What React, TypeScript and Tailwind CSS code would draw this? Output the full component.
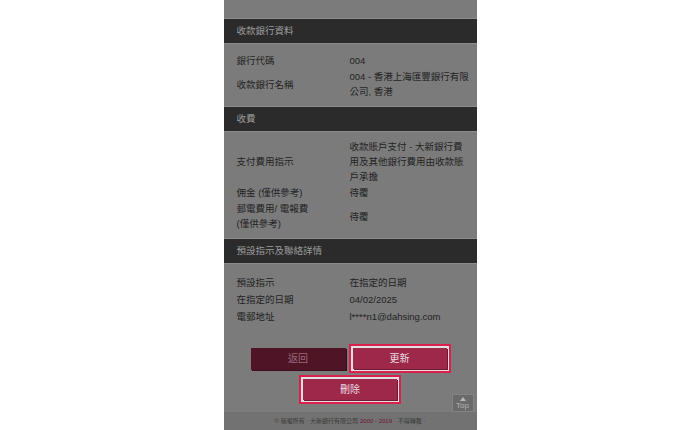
import type { ReactNode } from "react"

const FONT = "font-['Liberation_Sans','Noto_Sans_CJK_TC',sans-serif]"

function SectionHeader({ children }: { children: ReactNode }) {
  return (
    <div className="h-[26px] flex items-center px-[13px] bg-[#2b2b2b] border-y border-[#8c8c8c] text-[9.5px] text-[#9c9c9c]">
      {children}
    </div>
  )
}

function Row({ label, value }: { label: ReactNode; value: ReactNode }) {
  return (
    <div className="min-h-[17px] flex items-center text-[9.5px] leading-[15px] text-[#232323]">
      <div className="w-[126px] pl-[13px] pr-2 shrink-0">{label}</div>
      <div className="flex-1 pr-[10px]">{value}</div>
    </div>
  )
}

export default function App() {
  return (
    <div className={`h-[430px] w-full bg-white flex justify-center ${FONT}`}>
      <div className="relative w-[253px] h-full bg-[#7b7b7b] flex flex-col overflow-hidden">
        <div className="h-[18px] shrink-0" />

        {/* 收款銀行資料 */}
        <SectionHeader>收款銀行資料</SectionHeader>
        <div className="pt-[8px] pb-[7px]">
          <Row label="銀行代碼" value="004" />
          <Row
            label="收款銀行名稱"
            value={
              <>
                <span className="whitespace-nowrap">004 - 香港上海匯豐銀行有限</span>
                <br />
                公司, 香港
              </>
            }
          />
        </div>

        {/* 收費 */}
        <SectionHeader>收費</SectionHeader>
        <div className="pt-[7px] pb-[7px]">
          <Row label="支付費用指示" value="收款賬戶支付 - 大新銀行費用及其他銀行費用由收款賬戶承擔" />
          <Row label="佣金 (僅供參考)" value="待覆" />
          <Row
            label={
              <>
                郵電費用/ 電報費
                <br />
                (僅供參考)
              </>
            }
            value="待覆"
          />
        </div>

        {/* 預設指示及聯絡詳情 */}
        <SectionHeader>預設指示及聯絡詳情</SectionHeader>
        <div className="pt-[10px]">
          <Row label="預設指示" value="在指定的日期" />
          <Row label="在指定的日期" value="04/02/2025" />
          <Row label="電郵地址" value="l****n1@dahsing.com" />
        </div>

        {/* Buttons */}
        <div className="mt-[19px] flex flex-col items-center gap-[2px]">
          <div className="flex items-center justify-center gap-[3px] pl-[1px]">
            <button className="w-[95px] h-[22px] bg-[#4f1527] text-[#9b6a7a] text-[10px] shadow-[1px_1px_0_#3a0f1c]">
              返回
            </button>
            <div className="border-2 border-[#dc1f4c] bg-[#e2e2e2] p-[2px]">
              <button className="block w-[94px] h-[21px] bg-[#9d2849] text-[#eadde1] text-[10px] shadow-[1px_1px_0_#6a1a31]">
                更新
              </button>
            </div>
          </div>
          <div className="border-2 border-[#dc1f4c] bg-[#e2e2e2] p-[2px]">
            <button className="block w-[94px] h-[21px] bg-[#9d2849] text-[#eadde1] text-[10px] shadow-[1px_1px_0_#6a1a31]">
              刪除
            </button>
          </div>
        </div>

        <div className="flex-1" />

        {/* Footer */}
        <div className="h-[18px] shrink-0 bg-[#727272] flex items-center justify-center text-[6px] text-[#3b3b3b]">
          © 版權所有 · 大新銀行有限公司 <span className="text-[#6c1631] mx-[2px]">2000 - 2019</span> · 不得轉載 ·
        </div>

        {/* Top button */}
        <div className="absolute right-[3px] bottom-[18px] w-[22px] h-[18px] bg-[#6a6a6a] border border-[#848484] flex flex-col items-center justify-center">
          <div className="w-0 h-0 border-x-[3px] border-x-transparent border-b-[4px] border-b-[#b9b9b9]" />
          <div className="text-[8px] leading-[9px] text-[#b3b3b3] font-['Liberation_Sans',sans-serif]">Top</div>
        </div>
      </div>
    </div>
  )
}
